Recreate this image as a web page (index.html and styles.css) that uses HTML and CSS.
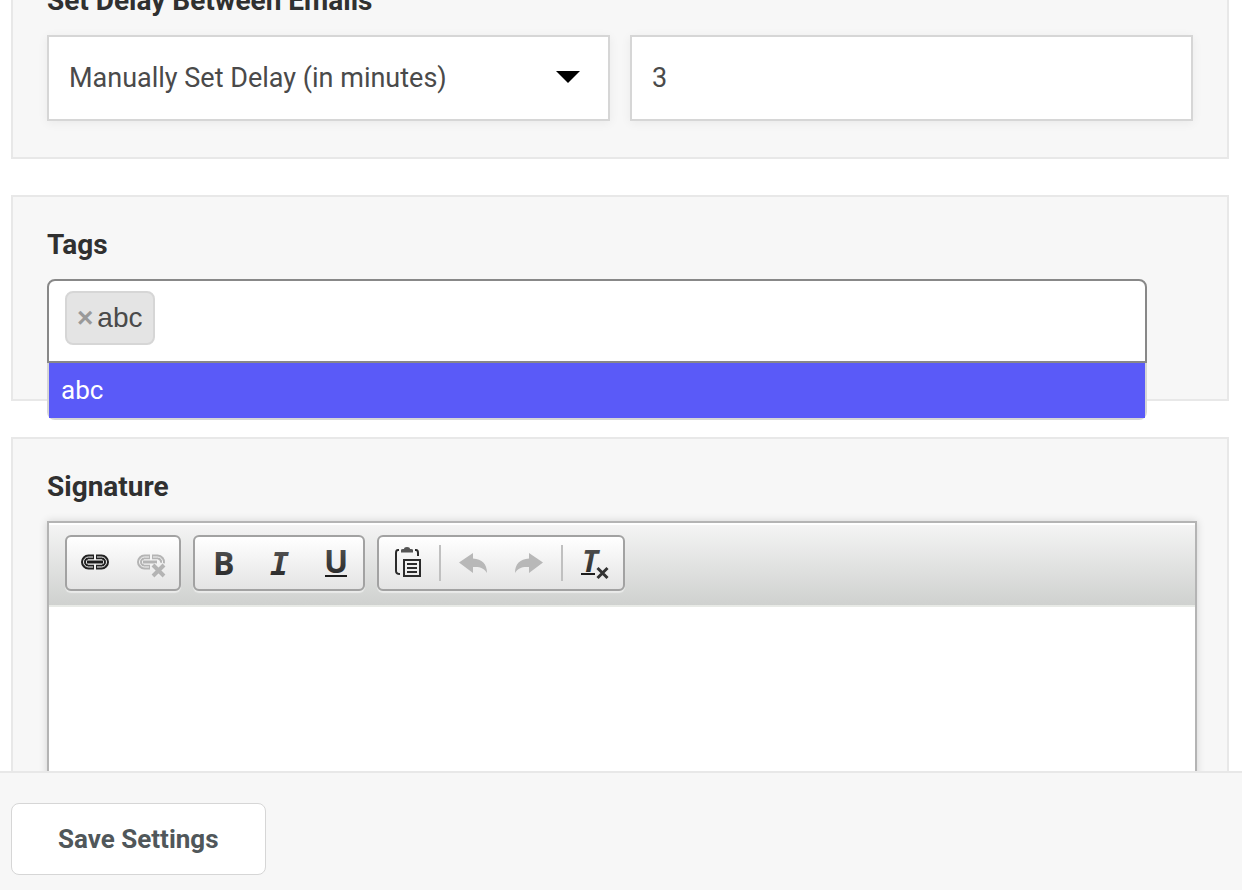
FILE: index.html
```html
<!DOCTYPE html>
<html lang="en">
<head>
<meta charset="utf-8">
<title>Settings</title>
<link rel="stylesheet" href="styles.css">
</head>
<body>

<form class="settings" id="settingsForm">
  <div class="panel">
    <label class="title" for="delayMode">Set Delay Between Emails</label>
    <div class="row">
      <div class="select">
        <select id="delayMode" class="field">
          <option>Manually Set Delay (in minutes)</option>
        </select>
      </div>
      <input type="text" class="field" value="3" aria-label="Delay in minutes">
    </div>
  </div>

  <div class="panel">
    <label class="title" for="tags">Tags</label>
    <div class="tags">
      <span class="tag"><button type="button" class="tag-remove" aria-label="Remove abc">×</button>abc</span>
      <input type="text" id="tags" class="tag-search">
      <ul class="dropdown">
        <li>abc</li>
      </ul>
    </div>
  </div>

  <div class="panel">
    <label class="title" for="signature">Signature</label>
    <div class="editor">
      <div class="toolbar">
        <div class="group">
          <button type="button" aria-label="Link">
            <svg viewBox="0 0 32 32">
              <g fill="none" stroke="#222" stroke-width="5">
                <path d="M15 10H9.500a5 5 0 0 0 0 10H15"/>
                <path d="M17 10H22.500a5 5 0 0 1 0 10H17"/>
              </g>
              <g fill="none" stroke="#f4f4f4" stroke-width="1">
                <path d="M14 10H9.500a5 5 0 0 0 0 10H14"/>
                <path d="M18 10H22.500a5 5 0 0 1 0 10H18"/>
              </g>
              <path d="M9 15H23" stroke="#f4f4f4" stroke-width="5"/>
              <path d="M8 15H24" stroke="#1c1c1c" stroke-width="3"/>
            </svg>
          </button>
          <button type="button" aria-label="Unlink" disabled>
            <svg viewBox="0 0 32 32">
              <g fill="none" stroke="#b4b4b4" stroke-width="5">
                <path d="M15 10H9.500a5 5 0 0 0 0 10H15"/>
                <path d="M17 10H22.500a5 5 0 0 1 5 6"/>
              </g>
              <g fill="none" stroke="#f4f4f4" stroke-width="1">
                <path d="M14 10H9.500a5 5 0 0 0 0 10H14"/>
                <path d="M18 10H22.500a5 5 0 0 1 5 6"/>
              </g>
              <path d="M9 15H23" stroke="#f4f4f4" stroke-width="5"/>
              <path d="M8 15H22" stroke="#b4b4b4" stroke-width="3"/>
              <path d="M18 18L29 29M29 18L18 29" stroke="#f0f0f0" stroke-width="6"/>
              <path d="M18 18L29 29M29 18L18 29" stroke="#b4b4b4" stroke-width="4"/>
            </svg>
          </button>
        </div>

        <div class="group">
          <button type="button" aria-label="Bold">
            <svg viewBox="0 0 32 32">
              <defs>
                <linearGradient id="ink" x1="0" y1="0" x2="0" y2="1">
                  <stop offset="0" stop-color="#5a5a5a"/>
                  <stop offset="1" stop-color="#222"/>
                </linearGradient>
              </defs>
              <text x="6" y="28" class="glyph">B</text>
            </svg>
          </button>
          <button type="button" aria-label="Italic">
            <svg viewBox="0 0 32 32"><text x="7" y="28" class="glyph mono">I</text></svg>
          </button>
          <button type="button" aria-label="Underline">
            <svg viewBox="0 0 32 32">
              <text x="5" y="26" class="glyph">U</text>
              <rect x="6" y="28" width="22" height="2" fill="#1c1c1c"/>
            </svg>
          </button>
        </div>

        <div class="group">
          <button type="button" aria-label="Paste">
            <svg viewBox="0 0 32 32" fill="none" stroke="#2b2b2b" stroke-width="2">
              <path d="M8 3H7q-2 0-2 3v18q0 3 4 3M24 3h1q2 0 2 3v3"/>
              <path d="M10 5.500V3q0-1 2-1h1q0-2 3-2t3 2h1q2 0 2 1v2.500z" fill="#555" stroke="none"/>
              <rect x="13" y="13" width="16" height="16"/>
              <path d="M16 17h10M16 21h10M16 25h10"/>
            </svg>
          </button>
          <span class="separator"></span>
          <button type="button" aria-label="Undo" disabled>
            <svg viewBox="0 0 32 32" fill="#b8b8b8">
              <path d="M2 15.500L16 6V11.500C25 12 30 17 30 26C27 21 23 19.500 16 20V26Z"/>
            </svg>
          </button>
          <button type="button" aria-label="Redo" disabled>
            <svg viewBox="0 0 32 32" fill="#b8b8b8">
              <path d="M30 15.500L16 6V11.500C7 12 2 17 2 26C5 21 9 19.500 16 20V26Z"/>
            </svg>
          </button>
          <span class="separator"></span>
          <button type="button" aria-label="Remove Format">
            <svg viewBox="0 0 32 32">
              <text x="3" y="25" class="glyph slanted">T</text>
              <rect x="2" y="26" width="14" height="2" fill="#1c1c1c"/>
              <path d="M18.500 21L28.500 31M28.500 21L18.500 31" stroke="#333" stroke-width="3"/>
            </svg>
          </button>
        </div>
      </div>
      <textarea id="signature"></textarea>
    </div>
  </div>
</form>

<footer>
  <button type="submit" form="settingsForm" class="save">Save Settings</button>
</footer>

</body>
</html>
```
FILE: styles.css
```css
* {
    box-sizing: border-box;
}
body {
    display: flex;
    flex-direction: column;
    height: 100vh;
    margin: 0;
    overflow: hidden;
    background-color: white;
    color: #4a4a4a;
    font-family: Roboto, "Liberation Sans", sans-serif;
    font-size: 28px;
}
button, input, select, textarea {
    font: inherit;
    color: inherit;
}
/* scrolled down to the last three panels */
.settings {
    flex: 1;
    min-height: 0;
    margin-top: -49px;
    padding: 0 13px 0 11px;
    overflow: hidden;
}
.panel {
    margin-bottom: 36px;
    padding: 32px 34px 36px;
    border: 2px solid #e8e8e8;
    background-color: #f7f7f7;
}
.title {
    display: block;
    margin-bottom: 18px;
    color: #303030;
    font-weight: bold;
    line-height: 32px;
}
.row {
    display: grid;
    grid-template-columns: repeat(2, 1fr);
    gap: 20px;
}
.field {
    display: block;
    width: 100%;
    height: 86px;
    padding: 0 20px;
    border: 2px solid #d6d6d6;
    border-radius: 0;
    background-color: white;
    box-shadow: 0 2px 10px rgba(0, 0, 0, 0.06);
    font-size: 27px;
    appearance: none;
}
.select {
    position: relative;
}
.select::after {
    content: "";
    position: absolute;
    top: 36px;
    right: 30px;
    border: 12px solid transparent;
    border-top-color: black;
    border-bottom: 0;
    pointer-events: none;
}
.tags {
    position: relative;
    display: flex;
    width: 96%;
    height: 84px;
    padding: 10px 16px;
    border: 2px solid #888;
    border-radius: 8px 8px 0 0;
    background-color: white;
}
.tag {
    display: flex;
    align-items: center;
    height: 54px;
    padding: 0 10px;
    border: 2px solid #d6d6d6;
    border-radius: 8px;
    background-color: #e4e4e4;
    font-family: "Liberation Sans", Arial, sans-serif;
}
.tag-remove {
    margin: 0 4px 0 0;
    padding: 0;
    border: 0;
    background: none;
    color: #999;
    font-weight: bold;
}
.tag-search {
    flex: 1;
    border: 0;
    outline: 0;
    background: none;
}
.dropdown {
    position: absolute;
    z-index: 1;
    top: calc(100% + 2px);
    left: -2px;
    right: -2px;
    margin: 0;
    padding: 0;
    border: 2px solid #d6d6d6;
    border-top: 0;
    border-radius: 0 0 8px 8px;
    list-style: none;
}
.dropdown li {
    padding: 0 12px;
    background-color: #5a5af8;
    color: white;
    font-size: 26px;
    line-height: 55px;
}
.editor {
    margin-right: -4px;
    border: 2px solid #b4b4b4;
    box-shadow: 0 0 8px rgba(0, 0, 0, 0.15);
}
.toolbar {
    display: flex;
    gap: 12px;
    padding: 10px 16px 14px;
    border-top: 2px solid white;
    border-bottom: 2px solid #e8eae6;
    background: linear-gradient(#f4f4f4, #cfd1cf) padding-box;
}
.group {
    display: flex;
    align-items: center;
    height: 56px;
    border: 2px solid #a2a2a2;
    border-radius: 6px;
    background: linear-gradient(white, #e4e4e4) padding-box;
    box-shadow: 0 2px 1px rgba(255, 255, 255, 0.5);
}
.group button {
    width: 56px;
    height: 52px;
    padding: 0;
    border: 0;
    background: none;
}
.group svg {
    display: block;
    width: 32px;
    height: 32px;
    margin: 0 auto;
    overflow: visible;
}
.glyph {
    fill: url(#ink);
    font-family: "Open Sans", sans-serif;
    font-size: 32px;
    font-weight: bold;
}
.mono {
    font-family: "DejaVu Sans Mono", monospace;
    font-style: italic;
}
.slanted {
    font-size: 30px;
    font-style: italic;
}
.separator {
    width: 2px;
    height: 36px;
    margin: 0 4px;
    background-color: #c0c0c0;
}
textarea {
    display: block;
    width: 100%;
    height: 400px;
    padding: 20px;
    border: 0;
    outline: 0;
    background-color: white;
    resize: none;
}
footer {
    padding: 30px 11px 15px;
    border-top: 2px solid #e8e8e8;
    background-color: #f7f7f7;
}
.save {
    display: block;
    height: 72px;
    padding: 0 46px;
    border: 1px solid #d6d6d6;
    border-radius: 8px;
    background-color: white;
    color: #50575a;
    font-size: 26px;
    font-weight: bold;
}
```
